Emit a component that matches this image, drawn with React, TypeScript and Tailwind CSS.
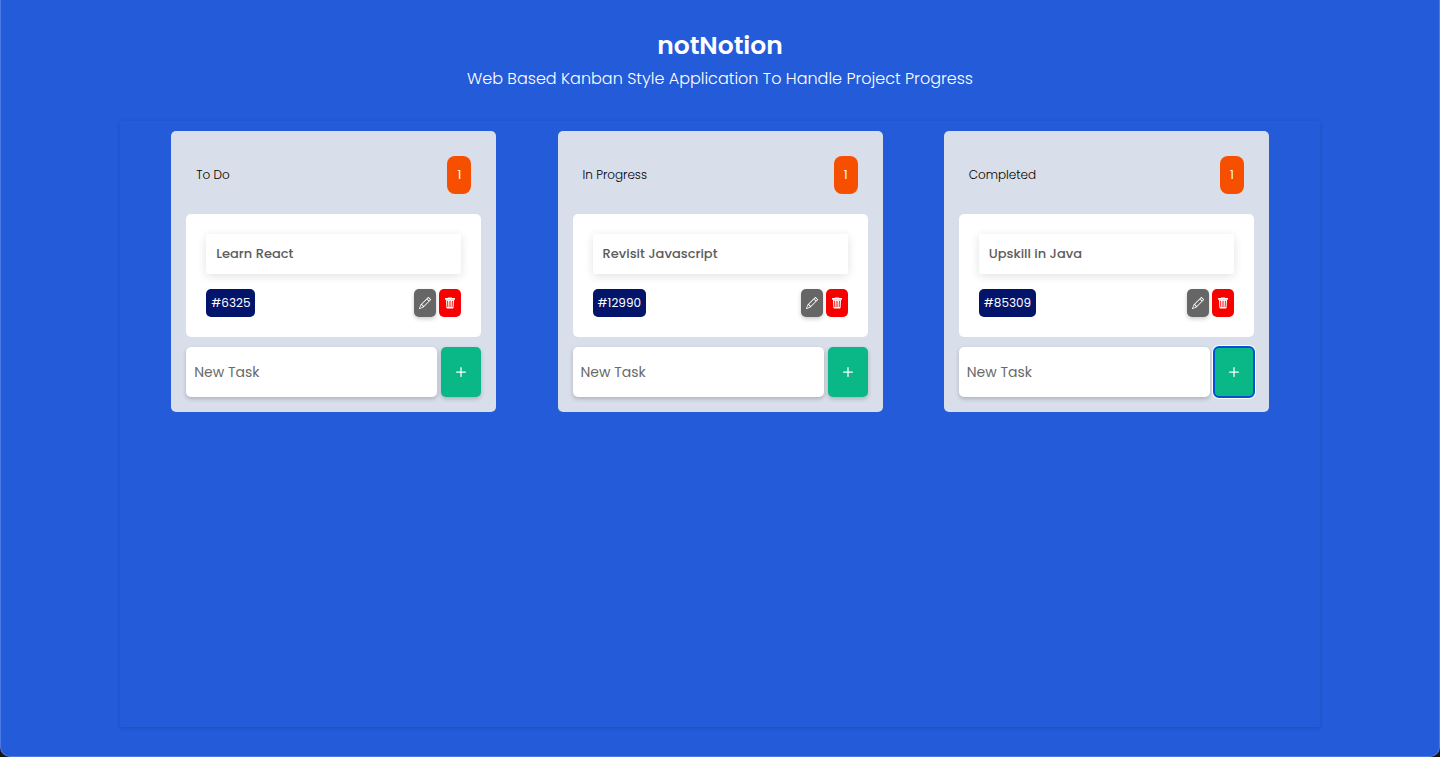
import { useState } from 'react';
import type { FormEvent } from 'react';
import { BsPencil, BsPlus } from 'react-icons/bs';

type Task = { id: number; title: string };
type Column = { key: string; name: string; tasks: Task[]; autoFocusAdd?: boolean };

const initialColumns: Column[] = [
  { key: 'todo', name: 'To Do', tasks: [{ id: 6325, title: 'Learn React' }] },
  { key: 'progress', name: 'In Progress', tasks: [{ id: 12990, title: 'Revisit Javascript' }] },
  { key: 'completed', name: 'Completed', tasks: [{ id: 85309, title: 'Upskill in Java' }], autoFocusAdd: true },
];

function TrashIcon() {
  return (
    <svg width="12" height="12" viewBox="0 0 12 12" fill="currentColor" aria-hidden="true">
      <path d="M4.4 0.4h3.2a.6.6 0 0 1 .6.5h2.3a.5.5 0 0 1 .5.5v.9a.5.5 0 0 1-.5.5h-9a.5.5 0 0 1-.5-.5v-.9a.5.5 0 0 1 .5-.5h2.3a.6.6 0 0 1 .6-.5z" />
      <path
        fillRule="evenodd"
        d="M2 2.7h8l-.4 7.9a1 1 0 0 1-1 .9h-5.2a1 1 0 0 1-1-.9zM3.2 3.8l.2 6.2h.9l-.2-6.2zM5.5 3.8v6.2h1v-6.2zM7.9 3.8l-.2 6.2h.9l.2-6.2z"
      />
    </svg>
  );
}

function TaskCard({ task, onDelete }: { task: Task; onDelete: () => void }) {
  return (
    <li className="flex flex-col gap-[15px] rounded-[5px] bg-white p-5">
      <p className="flex h-10 items-center rounded-xs px-2.5 text-[13px] font-medium text-[#5c5c5c] shadow-[0_2px_10px_rgba(0,0,0,0.12)]">
        {task.title}
      </p>
      <div className="flex items-center justify-between">
        <span className="flex h-7 items-center rounded-[5px] bg-[#03156a] px-[5px] text-xs text-white">
          #{task.id}
        </span>
        <div className="flex gap-[3px]">
          <button
            type="button"
            aria-label={`Edit ${task.title}`}
            className="flex h-7 w-[22px] items-center justify-center rounded-[5px] bg-[#666] text-white shadow-[0_2px_4px_rgba(0,0,0,0.2)]"
          >
            <BsPencil size={12} />
          </button>
          <button
            type="button"
            aria-label={`Delete ${task.title}`}
            onClick={onDelete}
            className="flex h-7 w-[22px] items-center justify-center rounded-[5px] bg-[#f80000] text-white"
          >
            <TrashIcon />
          </button>
        </div>
      </div>
    </li>
  );
}

function BoardColumn({
  column,
  onAdd,
  onDelete,
}: {
  column: Column;
  onAdd: (title: string) => void;
  onDelete: (id: number) => void;
}) {
  const [title, setTitle] = useState('');

  const submit = (event: FormEvent) => {
    event.preventDefault();
    if (title.trim()) {
      onAdd(title.trim());
      setTitle('');
    }
  };

  return (
    <section className="m-2.5 flex w-[325px] flex-col gap-2.5 rounded-[5px] bg-[#d8deea] p-[15px]">
      <div className="flex items-center justify-between p-2.5">
        <h2 className="text-xs font-light text-black">{column.name}</h2>
        <span className="flex h-[38px] items-center rounded-lg bg-[#f74f00] px-2.5 text-xs text-white">
          {column.tasks.length}
        </span>
      </div>
      <ul className="flex flex-col gap-2.5">
        {column.tasks.map((task) => (
          <TaskCard key={task.id} task={task} onDelete={() => onDelete(task.id)} />
        ))}
      </ul>
      <form onSubmit={submit} className="flex gap-1">
        <input
          type="text"
          aria-label={`New task in ${column.name}`}
          placeholder="New Task"
          value={title}
          onChange={(event) => setTitle(event.target.value)}
          className="h-[50px] min-w-0 flex-1 rounded-[5px] bg-white px-2 text-sm text-[#444] shadow-[0_2px_4px_rgba(0,0,0,0.2)] outline-none placeholder:text-[#6a6a6a]"
        />
        <button
          type="submit"
          aria-label={`Add task to ${column.name}`}
          autoFocus={column.autoFocusAdd}
          className="flex h-[50px] w-10 items-center justify-center rounded-[5px] bg-[#0ab887] text-white shadow-[0_2px_4px_rgba(0,0,0,0.2)] focus:shadow-[0_0_0_2px_#fff] focus:outline-2 focus:-outline-offset-1 focus:outline-[#0051d8]"
        >
          <BsPlus size={20} />
        </button>
      </form>
    </section>
  );
}

export default function App() {
  const [columns, setColumns] = useState(initialColumns);

  const updateTasks = (key: string, change: (tasks: Task[]) => Task[]) =>
    setColumns((all) => all.map((c) => (c.key === key ? { ...c, tasks: change(c.tasks) } : c)));

  return (
    <div className="flex min-h-screen flex-col bg-[#151515] font-['Poppins','Inter',sans-serif]">
      <div className="flex flex-1 flex-col items-center rounded-b-[10px] border-x border-b border-[#4b7ae2] bg-[#235bd9] px-8 pb-[29px]">
        <header className="pt-7 pb-7 text-center text-white">
          <h1 className="text-[25px] leading-9 font-semibold">notNotion</h1>
          <p className="text-base leading-[29px] font-light">
            Web Based Kanban Style Application To Handle Project Progress
          </p>
        </header>
        <main className="flex w-full max-w-[1200px] flex-1 flex-wrap content-start items-start justify-evenly shadow-[0_1px_4px_rgba(0,0,0,0.15)]">
          {columns.map((column) => (
            <BoardColumn
              key={column.key}
              column={column}
              onAdd={(title) =>
                updateTasks(column.key, (tasks) => [
                  ...tasks,
                  { id: Math.floor(Math.random() * 100000), title },
                ])
              }
              onDelete={(id) => updateTasks(column.key, (tasks) => tasks.filter((t) => t.id !== id))}
            />
          ))}
        </main>
      </div>
    </div>
  );
}
